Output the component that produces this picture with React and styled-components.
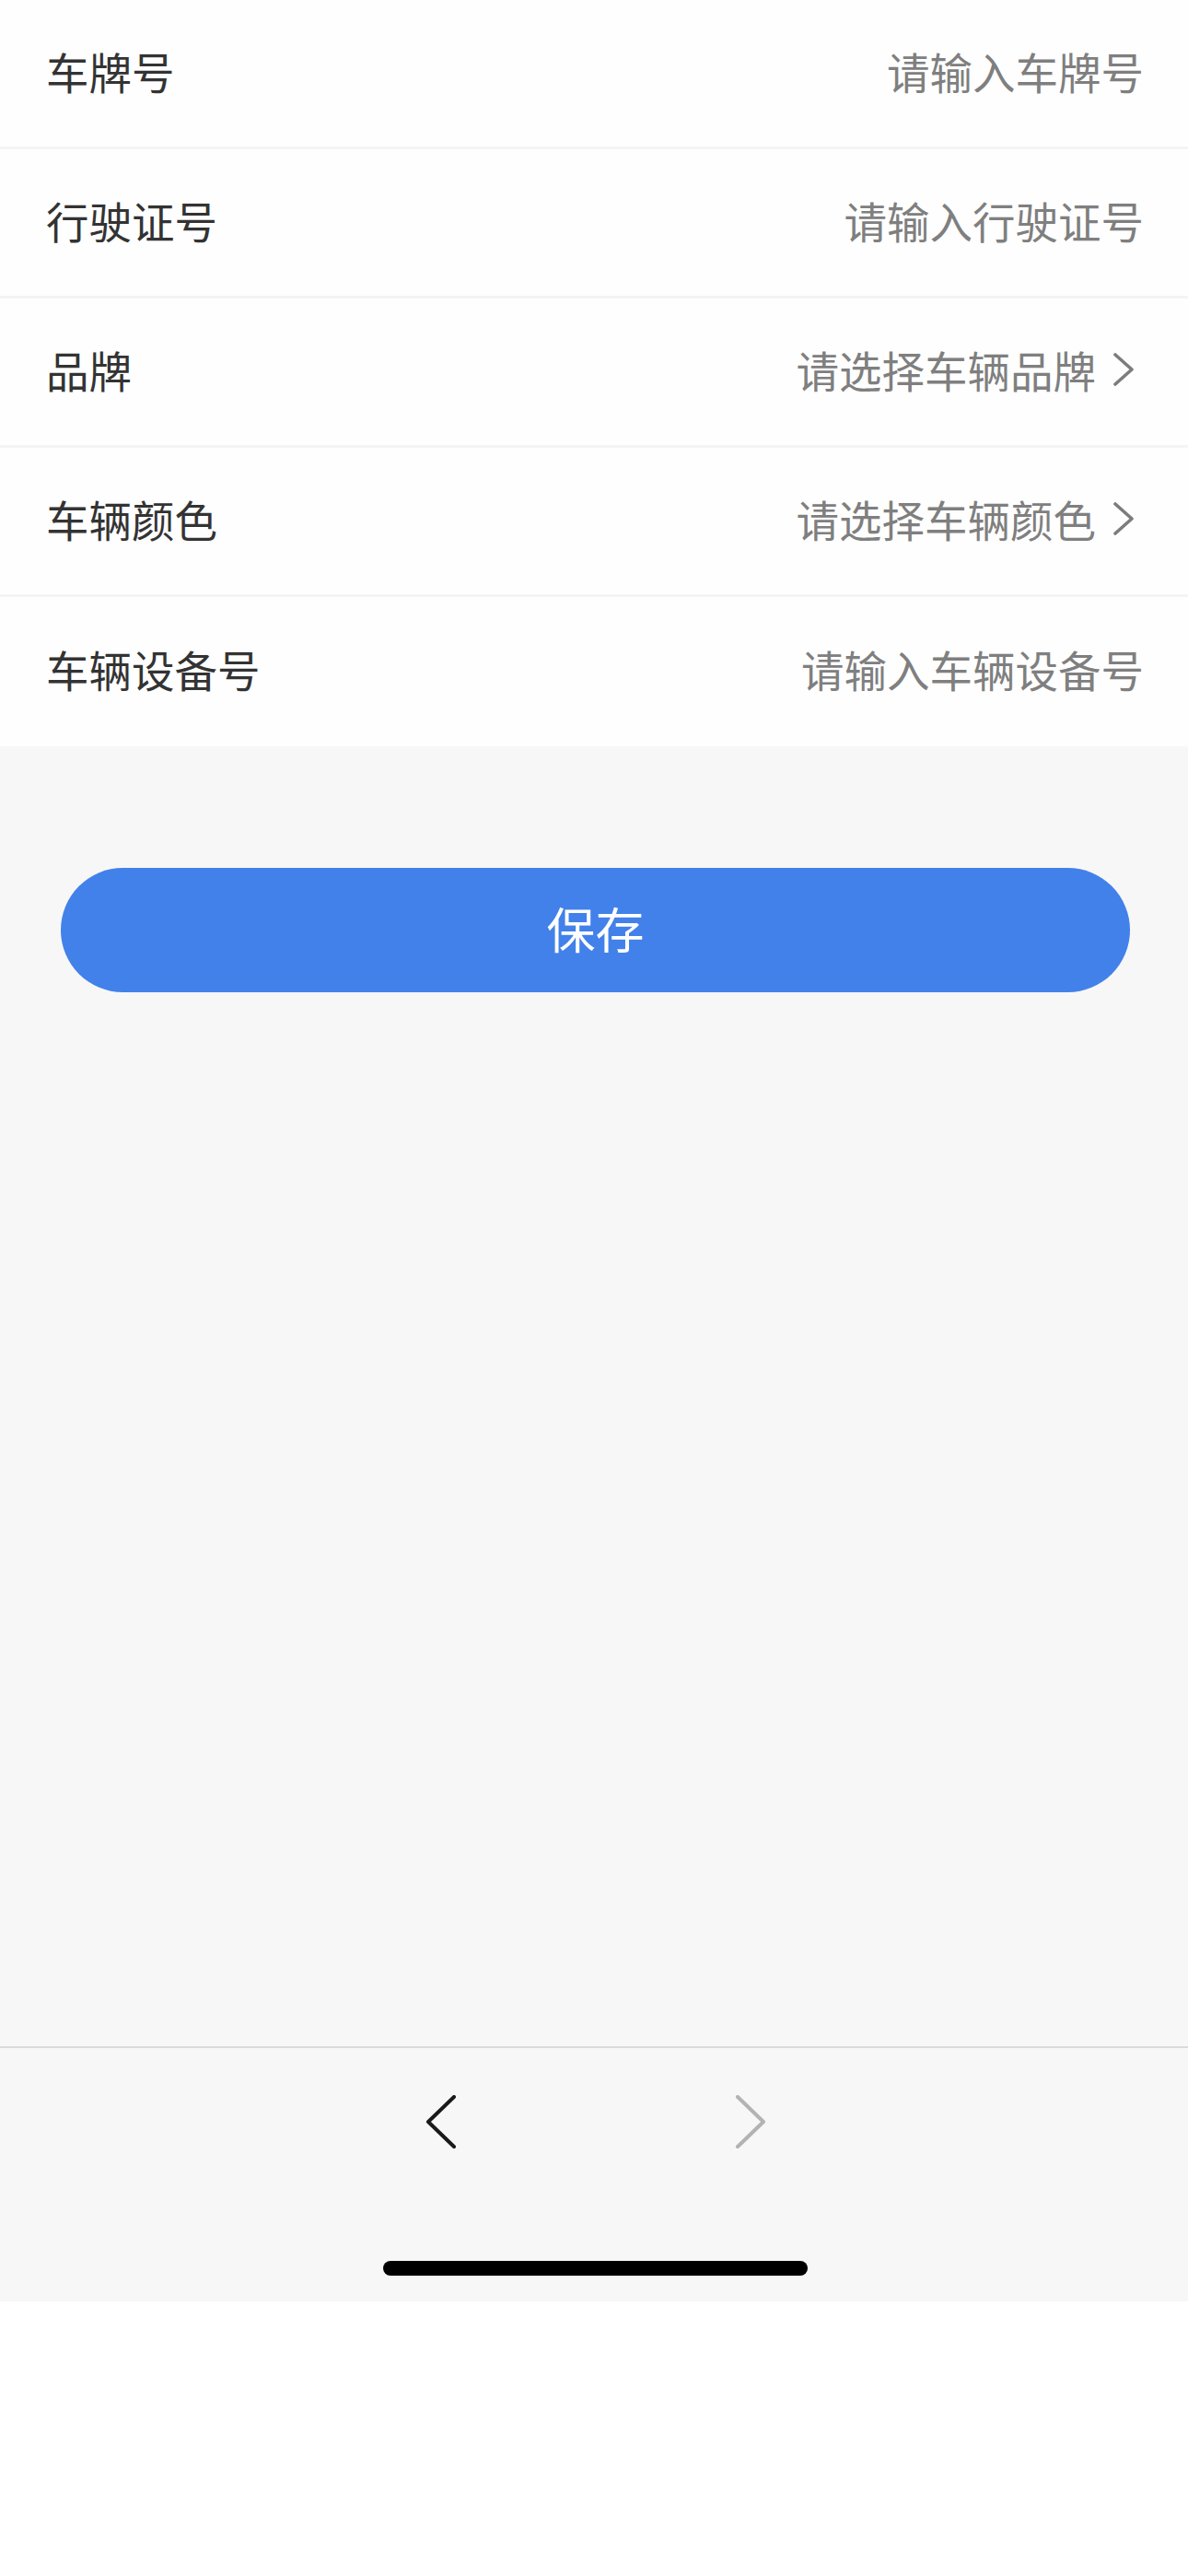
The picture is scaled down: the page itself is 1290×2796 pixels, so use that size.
import React from "react";
import styled, { createGlobalStyle } from "styled-components";

const fields = [
  { label: "车牌号", placeholder: "请输入车牌号" },
  { label: "行驶证号", placeholder: "请输入行驶证号" },
  { label: "品牌", placeholder: "请选择车辆品牌", arrow: true },
  { label: "车辆颜色", placeholder: "请选择车辆颜色", arrow: true },
  { label: "车辆设备号", placeholder: "请输入车辆设备号" },
];

const RowArrow = () => (
  <ArrowIcon viewBox="0 0 24 36" width="24" height="36">
    <path
      d="M2 2 L20 18 L2 34"
      fill="none"
      stroke="#7c7c7c"
      strokeWidth="3.6"
      strokeLinecap="round"
      strokeLinejoin="round"
    />
  </ArrowIcon>
);

const NavChevron = ({ dir, color }) => (
  <svg viewBox="0 0 34 58" width="34" height="58">
    <path
      d={dir === "left" ? "M31 2 L3 29 L31 56" : "M3 2 L31 29 L3 56"}
      fill="none"
      stroke={color}
      strokeWidth="4"
      strokeLinecap="round"
      strokeLinejoin="round"
    />
  </svg>
);

const App = () => {
  return (
    <>
      <GlobalStyle />
      <Screen>
        <Form>
          {fields.map((f) => (
            <Row key={f.label}>
              <Label>{f.label}</Label>
              <Value>
                <Placeholder>{f.placeholder}</Placeholder>
                {f.arrow && <RowArrow />}
              </Value>
            </Row>
          ))}
        </Form>
        <Content>
          <SaveButton type="button">保存</SaveButton>
        </Content>
        <Toolbar>
          <NavRow>
            <NavButton type="button">
              <NavChevron dir="left" color="#1a1a1a" />
            </NavButton>
            <NavButton type="button">
              <NavChevron dir="right" color="#b3b3b3" />
            </NavButton>
          </NavRow>
          <HomeArea>
            <HomeIndicator />
          </HomeArea>
        </Toolbar>
      </Screen>
    </>
  );
};

export default App;

const GlobalStyle = createGlobalStyle`
  html, body {
    margin: 0;
    padding: 0;
    background: #ffffff;
  }
  body {
    font-family: "Noto Sans CJK SC", "Noto Sans", sans-serif;
  }
  * {
    box-sizing: border-box;
  }
`;

const Screen = styled.div`
  width: 1290px;
  height: 2498px;
  display: flex;
  flex-direction: column;
  background: #f7f7f7;
`;

const Form = styled.div`
  display: flex;
  flex-direction: column;
  background: #fefefe;
`;

const Row = styled.div`
  height: 162px;
  padding: 0 48px 5px;
  display: flex;
  align-items: center;
  justify-content: space-between;
  border-bottom: 3px solid #f4f4f4;
  background: #fefefe;

  &:last-child {
    border-bottom: none;
  }
`;

const Label = styled.span`
  font-size: 46.5px;
  color: #333333;
  line-height: 1;
  padding-left: 2px;
`;

const Value = styled.div`
  display: flex;
  align-items: center;
`;

const Placeholder = styled.span`
  font-size: 46.5px;
  color: #7f7f7f;
  line-height: 1;
`;

const ArrowIcon = styled.svg`
  display: block;
  margin-left: 19px;
  margin-right: 9px;
`;

const Content = styled.div`
  flex: 1;
  padding: 132px 63px 0 66px;
`;

const SaveButton = styled.button`
  width: 100%;
  height: 135px;
  border: none;
  border-radius: 68px;
  background: #4281ea;
  color: #ffffff;
  font-family: "Noto Sans CJK SC", "Noto Sans", sans-serif;
  font-size: 53px;
  padding: 0 0 5px;
  display: flex;
  align-items: center;
  justify-content: center;
  cursor: pointer;
`;

const Toolbar = styled.div`
  border-top: 2px solid #dadada;
  background: #f7f7f7;
  display: flex;
  flex-direction: column;
`;

const NavRow = styled.div`
  height: 160px;
  display: flex;
  align-items: center;
  justify-content: center;
  gap: 236px;
  padding-left: 4px;
`;

const NavButton = styled.button`
  width: 100px;
  height: 100px;
  border: none;
  background: transparent;
  display: flex;
  align-items: center;
  justify-content: center;
  padding: 0;
`;

const HomeArea = styled.div`
  padding: 71px 0 28px;
  display: flex;
  justify-content: center;
`;

const HomeIndicator = styled.div`
  width: 461px;
  height: 16px;
  border-radius: 8px;
  background: #000000;
  margin-left: 2px;
`;
